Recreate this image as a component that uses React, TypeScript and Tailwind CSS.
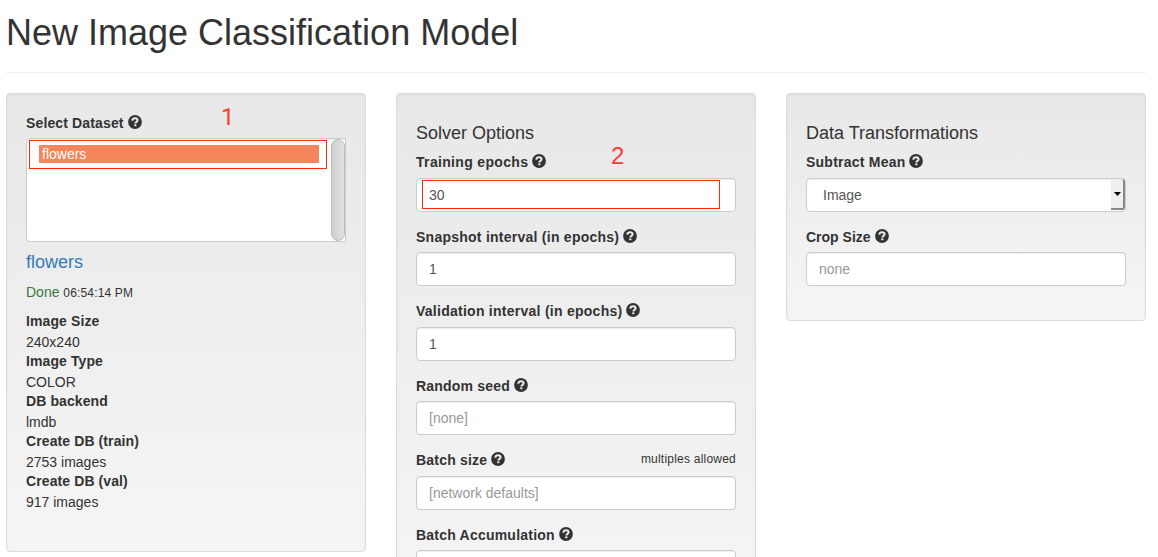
import type { ReactNode } from "react";

function HelpIcon() {
  return (
    <svg className="mt-[2px] h-[14px] w-[14px] shrink-0" viewBox="0 0 14 14" aria-hidden="true">
      <circle cx="7" cy="7" r="6.9" fill="#333" />
      <path
        d="M4.4 5.7C4.4 3.9 5.5 3.3 7 3.3C8.6 3.3 9.6 4 9.6 5.3C9.6 6.9 7.3 6.7 7.3 8.5"
        fill="none"
        stroke="#ececec"
        strokeWidth="2"
      />
      <rect x="6.2" y="9.4" width="2.2" height="1.8" fill="#ececec" />
    </svg>
  );
}

function Label({ text, note, tracking = "" }: { text: string; note?: string; tracking?: string }) {
  return (
    <div className="flex h-[25.45px] items-start gap-1 font-bold leading-5">
      <span className={`whitespace-nowrap ${tracking}`}>{text}</span>
      <HelpIcon />
      {note && (
        <span className="ml-auto text-[12px] font-normal leading-[18px] tracking-[0.22px]">{note}</span>
      )}
    </div>
  );
}

function Panel({ className, children }: { className: string; children: ReactNode }) {
  return (
    <section
      className={`w-[360px] shrink-0 rounded-[4px] border border-[#dcdcdc] bg-linear-to-b from-[#e8e8e8] to-[#f5f5f5] p-[19px] shadow-[inset_0_1px_3px_rgba(0,0,0,0.05),0_1px_0_rgba(255,255,255,0.1)] ${className}`}
    >
      {children}
    </section>
  );
}

const box =
  "flex h-[34px] items-center rounded-[4px] border border-[#ccc] bg-white px-3 shadow-[inset_0_1px_1px_rgba(0,0,0,0.075)]";

function Field({
  label,
  value,
  placeholder,
  note,
  marked,
  tracking,
}: {
  label: string;
  value?: string;
  placeholder?: string;
  note?: string;
  marked?: boolean;
  tracking?: string;
}) {
  return (
    <div className="mb-[15px]">
      <Label text={label} note={note} tracking={tracking} />
      <div className={`relative ${box}`}>
        {value ? <span className="text-[#555]">{value}</span> : <span className="text-[#999]">{placeholder}</span>}
        {marked && (
          <>
            <div className="absolute left-[5px] top-[1px] h-[29px] w-[298px] border border-[#ff2a00]" />
            <span className="absolute left-[194px] top-[-37px] text-[24px] leading-7 text-[#ff3b30]">2</span>
          </>
        )}
      </div>
    </div>
  );
}

const details = [
  ["Image Size", "240x240"],
  ["Image Type", "COLOR"],
  ["DB backend", "lmdb"],
  ["Create DB (train)", "2753 images"],
  ["Create DB (val)", "917 images"],
];

export default function App() {
  return (
    <main className="h-[557px] w-[1158px] overflow-hidden bg-white px-[6px] font-['Liberation_Sans',Arial,sans-serif] text-[14px] leading-5 text-[#333]">
      <header className="mb-5 h-[73px] w-[1140px] border-b border-[#eee] pt-[13px]">
        <h1 className="text-[36px] leading-10">New Image Classification Model</h1>
      </header>
      <div className="flex items-start gap-[30px]">
        <Panel className="h-[459px]">
          <div className="relative">
            <Label text="Select Dataset" tracking="tracking-[0.14px]" />
            <span className="absolute left-[195px] top-[-10px] font-[Roboto] text-[24px] leading-7 text-[#ff3b30]">
              1
            </span>
          </div>
          <div className="relative flex h-[104px] justify-between rounded-l-[4px] border border-[#ccc] bg-white shadow-[inset_0_1px_1px_rgba(0,0,0,0.075)]">
            <div className="ml-3 mt-[6px] h-[18px] w-[280px] bg-[#f4865b] pl-[3px] leading-[18px] text-white">
              flowers
            </div>
            <div className="h-[102px] w-[14px] rounded-[7px] border border-[#bdbdbd] bg-linear-to-r from-[#d0d0d0] to-[#e0e0e0]" />
            <div className="absolute left-[2px] top-[1px] h-[29px] w-[298px] border border-[#ff2a00]" />
          </div>
          <h4 className="mt-[10px] text-[18px] leading-5 text-[#337ab7]">flowers</h4>
          <p className="mt-[10px]">
            <span className="text-[#3c763d]">Done</span>{" "}
            <span className="text-[12px] tracking-[0.16px]">06:54:14 PM</span>
          </p>
          <dl className="mt-[9px]">
            {details.map(([term, value]) => (
              <div key={term}>
                <dt className="h-5 font-bold leading-[18px] tracking-[0.1px]">{term}</dt>
                <dd>{value}</dd>
              </div>
            ))}
          </dl>
        </Panel>
        <Panel className="h-[520px]">
          <h4 className="mb-[9.4px] mt-[10px] text-[18px] leading-5">Solver Options</h4>
          <Field label="Training epochs" value="30" marked tracking="tracking-[0.33px]" />
          <Field label="Snapshot interval (in epochs)" value="1" tracking="tracking-[0.25px]" />
          <Field label="Validation interval (in epochs)" value="1" tracking="tracking-[0.26px]" />
          <Field label="Random seed" placeholder="[none]" tracking="tracking-[0.2px]" />
          <Field
            label="Batch size"
            placeholder="[network defaults]"
            note="multiples allowed"
            tracking="tracking-[0.2px]"
          />
          <Field label="Batch Accumulation" tracking="tracking-[0.22px]" />
        </Panel>
        <Panel className="h-[228px]">
          <h4 className="mb-[9.4px] mt-[10px] text-[18px] leading-5">Data Transformations</h4>
          <div className="mb-[15px]">
            <Label text="Subtract Mean" tracking="tracking-[0.23px]" />
            <div className={`${box} justify-between pl-4 pr-0`}>
              <span className="text-[#555]">Image</span>
              <div className="flex h-[31px] w-[14px] items-center justify-center rounded-r-[3px] border-b-2 border-r-2 border-[#888] bg-[#f0efee]">
                <svg className="h-[4px] w-[7px] shrink-0" viewBox="0 0 7 4">
                  <path d="M0 0H7L3.5 4Z" fill="#000" />
                </svg>
              </div>
            </div>
          </div>
          <Field label="Crop Size" placeholder="none" />
        </Panel>
      </div>
    </main>
  );
}
